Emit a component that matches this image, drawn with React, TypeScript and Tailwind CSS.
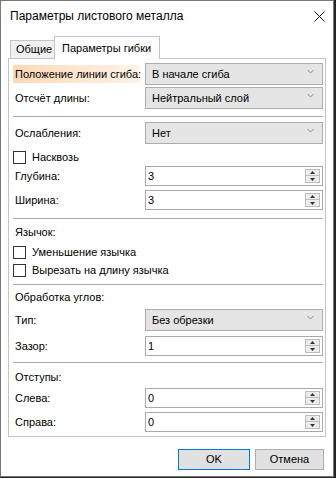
import React from "react";

const font = { fontFamily: '"Liberation Sans", Arial, sans-serif' };

function Chevron() {
  return (
    <svg width="7" height="5" viewBox="0 0 7 5" className="-translate-y-[3px]">
      <path d="M0.5 1 L3.5 4 L6.5 1" fill="none" stroke="#8a8a8a" strokeWidth="1" />
    </svg>
  );
}

function Select({ value }: { value: string }) {
  return (
    <div className="flex h-[22px] w-[178px] items-center justify-between whitespace-nowrap border border-[#adadad] bg-[#e5e5e5] pl-[6px] pr-[8px] text-[11px] text-black">
      <span>{value}</span>
      <Chevron />
    </div>
  );
}

function Spin({ value }: { value: string }) {
  return (
    <div className="flex h-[20px] w-[178px] items-center justify-between border border-[#a9a9a9] bg-white pl-[2px] pr-[2px] text-[11px] text-black">
      <span>{value}</span>
      <div className="flex h-[14px] w-[15px] flex-col">
        <div className="flex h-[7px] items-center justify-center border border-[#bdbdbd] bg-[#ececec]">
          <svg width="5" height="3" viewBox="0 0 5 3">
            <path d="M0 3 L2.5 0 L5 3 Z" fill="#333" />
          </svg>
        </div>
        <div className="-mt-px flex h-[8px] items-center justify-center border border-[#bdbdbd] bg-[#ececec]">
          <svg width="5" height="3" viewBox="0 0 5 3">
            <path d="M0 0 L2.5 3 L5 0 Z" fill="#333" />
          </svg>
        </div>
      </div>
    </div>
  );
}

function Row({
  label,
  children,
  className = "",
  highlight = false,
}: {
  label: string;
  children: React.ReactNode;
  className?: string;
  highlight?: boolean;
}) {
  return (
    <div className={`flex items-center justify-between ${className}`}>
      <div
        className={`flex h-[18px] w-[127px] items-center whitespace-nowrap pl-[2px] text-[11px] text-black ${
          highlight ? "bg-gradient-to-r from-[#fdd8b5] to-[#fff3e8]" : ""
        }`}
      >
        {label}
      </div>
      {children}
    </div>
  );
}

function Check({ label, className = "" }: { label: string; className?: string }) {
  return (
    <div className={`flex h-[13px] items-center ${className}`}>
      <div className="h-[13px] w-[13px] border border-[#333] bg-white" />
      <span className="ml-[6px] whitespace-nowrap text-[11px] text-black">{label}</span>
    </div>
  );
}

function Sep({ className = "" }: { className?: string }) {
  return <div className={`h-px w-full bg-[#a9a9a9] ${className}`} />;
}

function Caption({ text, className = "" }: { text: string; className?: string }) {
  return (
    <div className={`flex h-[16px] items-center whitespace-nowrap pl-[2px] text-[11px] text-black ${className}`}>
      {text}
    </div>
  );
}

export default function App() {
  return (
    <div className="h-[478px] w-[336px] bg-[#272320]" style={font}>
      <div className="flex h-[477px] w-[334px] flex-col border border-[#777777] bg-white">
        {/* Title bar */}
        <div className="flex h-[30px] items-center justify-between pl-[9px] pr-[8px]">
          <span className="whitespace-nowrap text-[12px] text-black">Параметры листового металла</span>
          <svg width="11" height="11" viewBox="0 0 11 11">
            <path d="M0.5 0.5 L10.5 10.5 M10.5 0.5 L0.5 10.5" stroke="#111" strokeWidth="1" />
          </svg>
        </div>

        <div className="flex flex-col pl-[7px]">
          {/* Tabs */}
          <div className="mt-[5px] flex items-end pl-[2px]">
            <div className="flex h-[18px] w-[45px] items-center whitespace-nowrap border border-b-0 border-[#c4c4c4] bg-[#f0f0f0] pl-[5px] text-[11px] text-black">
              Общие
            </div>
            <div className="relative z-10 -mb-px -ml-px flex h-[23px] w-[106px] items-center whitespace-nowrap border border-b-0 border-[#c4c4c4] bg-white pl-[7px] text-[11px] text-black">
              Параметры гибки
            </div>
          </div>

          {/* Panel */}
          <div className="flex w-[318px] flex-col border border-[#c4c4c4] bg-white pb-[4px] pl-[4px] pr-[2px]">
            <Row label="Положение линии сгиба:" className="mt-[4px]" highlight>
              <Select value="В начале сгиба" />
            </Row>
            <Row label="Отсчёт длины:" className="mt-[2px]">
              <Select value="Нейтральный слой" />
            </Row>
            <Sep className="mt-[7px]" />
            <Row label="Ослабления:" className="mt-[5px]">
              <Select value="Нет" />
            </Row>
            <Check label="Насквозь" className="mt-[7px]" />
            <Row label="Глубина:" className="mt-[2px]">
              <Spin value="3" />
            </Row>
            <Row label="Ширина:" className="mt-[4px]">
              <Spin value="3" />
            </Row>
            <Sep className="mt-[8px]" />
            <Caption text="Язычок:" className="mt-[5px]" />
            <Check label="Уменьшение язычка" className="mt-[6px]" />
            <Check label="Вырезать на длину язычка" className="mt-[5px]" />
            <Sep className="mt-[7px]" />
            <Caption text="Обработка углов:" className="mt-[4px]" />
            <Row label="Тип:" className="mt-[4px]">
              <Select value="Без обрезки" />
            </Row>
            <Row label="Зазор:" className="mt-[5px]">
              <Spin value="1" />
            </Row>
            <Sep className="mt-[6px]" />
            <Caption text="Отступы:" className="mt-[6px]" />
            <Row label="Слева:" className="mt-[3px]">
              <Spin value="0" />
            </Row>
            <Row label="Справа:" className="mt-[4px]">
              <Spin value="0" />
            </Row>
          </div>

          {/* Buttons */}
          <div className="mt-[12px] flex w-[318px] justify-end gap-[5px] pr-[2px]">
            <div className="flex h-[21px] w-[72px] items-center justify-center border border-[#0078d7] bg-[#e1e1e1] text-[11px] text-black">
              OK
            </div>
            <div className="flex h-[21px] w-[69px] items-center justify-center border border-[#adadad] bg-[#e1e1e1] text-[11px] text-black">
              Отмена
            </div>
          </div>
        </div>
      </div>
    </div>
  );
}
